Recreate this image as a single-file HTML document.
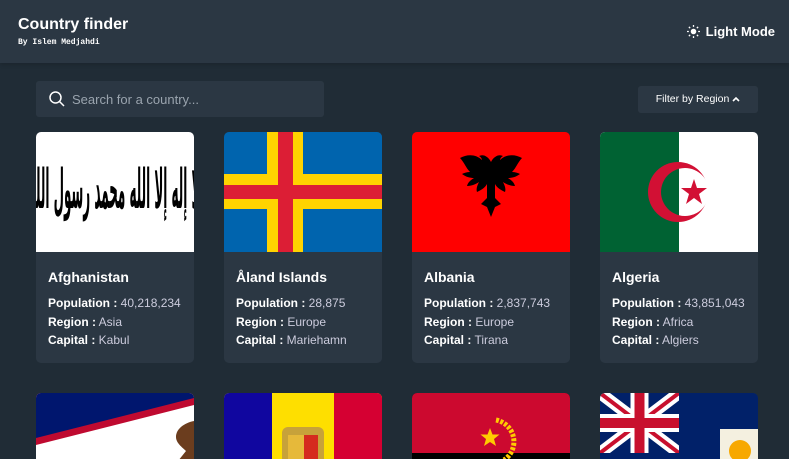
<!DOCTYPE html>
<html><head><meta charset="utf-8"><style>
*{margin:0;padding:0;box-sizing:border-box}
html,body{width:789px;height:459px;overflow:hidden}
body{background:#202c36;font-family:"Liberation Sans",sans-serif;color:#fff;position:relative}
.hdr{position:absolute;left:0;top:0;width:789px;height:63px;background:#2b3743;box-shadow:0 2px 4px rgba(0,0,0,.15)}
.t1{position:absolute;left:18px;top:16px;font-size:16px;font-weight:bold}
.t2{position:absolute;left:18px;top:38px;font-size:8px;font-family:"Liberation Mono",monospace;font-weight:bold}
.lm{position:absolute;right:14px;top:24px;font-size:13px;font-weight:bold}
.search{position:absolute;left:36px;top:81px;width:288px;height:36px;background:#2b3743;border-radius:3px}
.search span{position:absolute;left:36px;top:11px;font-size:13px;color:#9aa4ae}
.filter{position:absolute;left:638px;top:86px;width:120px;height:27px;background:#2b3743;border-radius:3px;font-size:10.5px;line-height:27px;text-align:center}
.card{position:absolute;width:158px;height:66px;background:#2b3743;border-radius:5px 5px 0 0;overflow:hidden}
.card.f{height:231px;border-radius:5px}
.flag{position:absolute;left:0;top:0;width:158px;height:120px;overflow:hidden}
.name{position:absolute;left:12px;top:137px;font-size:14px;font-weight:bold}
.info{position:absolute;left:12px;top:162px;font-size:12px;line-height:18.5px;color:#ccd}
.info b{color:#fff}
</style></head><body>
<div class="hdr"><div class="t1">Country finder</div><div class="t2">By Islem Medjahdi</div>
<div class="lm"><svg width="13" height="13" viewBox="0 0 14 14" style="vertical-align:-2px;margin-right:6px"><circle cx="7" cy="7" r="3" fill="#fff"/><g stroke="#fff" stroke-width="1.4"><path d="M7 0v2M7 12v2M0 7h2M12 7h2M2 2l1.4 1.4M10.6 10.6L12 12M2 12l1.4-1.4M10.6 3.4L12 2"/></g></svg>Light Mode</div></div>
<div class="search"><svg width="18" height="18" viewBox="0 0 18 18" style="position:absolute;left:12px;top:9px"><circle cx="7.5" cy="7.5" r="5.5" stroke="#fff" stroke-width="1.5" fill="none"/><path d="M11.5 11.5L16 16" stroke="#fff" stroke-width="1.5"/></svg><span>Search for a country...</span></div>
<div class="filter">Filter by Region <svg width="8" height="6" viewBox="0 0 8 6"><path d="M1 5l3-3 3 3" stroke="#fff" stroke-width="1.6" fill="none"/></svg></div>

<div class="card f" style="left:36px;top:132px"><div class="flag" style="background:#fff"><div style="position:absolute;left:0;top:24px;width:158px;height:70px;display:flex;justify-content:center;align-items:center"><span style="display:inline-block;white-space:nowrap;font-family:'DejaVu Sans',sans-serif;font-size:26px;font-weight:bold;color:#000;transform:scale(0.46,2.1)">لا إله إلا الله محمد رسول الله</span></div></div>
<div class="name">Afghanistan</div><div class="info"><b>Population :</b> 40,218,234<br><b>Region :</b> Asia<br><b>Capital :</b> Kabul</div></div>

<div class="card f" style="left:224px;top:132px"><div class="flag" style="background:#0064ae"><div style="position:absolute;left:43px;top:0;width:36px;height:120px;background:#ffd300"></div><div style="position:absolute;left:0;top:42px;width:158px;height:35px;background:#ffd300"></div><div style="position:absolute;left:54px;top:0;width:15px;height:120px;background:#dc1e35"></div><div style="position:absolute;left:0;top:53px;width:158px;height:14px;background:#dc1e35"></div></div>
<div class="name">Åland Islands</div><div class="info"><b>Population :</b> 28,875<br><b>Region :</b> Europe<br><b>Capital :</b> Mariehamn</div></div>

<div class="card f" style="left:412px;top:132px"><div class="flag" style="background:#f00"><svg width="158" height="120" viewBox="0 0 158 120"><path d="M79 30c-3-6-8-8-12-6 2 1 3 3 3 4-6-6-15-6-22-2 4 4 6 10 10 14-3 0-6 1-8 2 4 3 8 4 12 4-3 2-6 4-7 8 5 0 9-2 12-4-2 4-3 7-2 10 4-2 8-4 10-8l0 14-6 6 6 3 4 10 4-10 6-3-6-6 0-14c2 4 6 6 10 8 1-3 0-6-2-10 3 2 7 4 12 4-1-4-4-6-7-8 4 0 8-1 12-4-2-1-5-2-8-2 4-4 6-10 10-14-7-4-16-4-22 2 0-1 1-3 3-4-4-2-9 0-12 6z" fill="#000"/></svg></div>
<div class="name">Albania</div><div class="info"><b>Population :</b> 2,837,743<br><b>Region :</b> Europe<br><b>Capital :</b> Tirana</div></div>

<div class="card f" style="left:600px;top:132px"><div class="flag" style="background:#fff"><div style="position:absolute;left:0;top:0;width:79px;height:120px;background:#006233"></div>
<svg width="158" height="120" viewBox="0 0 158 120" style="position:absolute;left:0;top:0"><defs><clipPath id="l"><rect width="79" height="120"/></clipPath><clipPath id="r"><rect x="79" width="79" height="120"/></clipPath></defs><circle cx="78" cy="60" r="30" fill="#d21034"/><circle cx="85" cy="60" r="24" fill="#006233" clip-path="url(#l)"/><circle cx="85" cy="60" r="24" fill="#fff" clip-path="url(#r)"/><path d="M94 47l3 9 10 0-8 6 3 10-8-6-8 6 3-10-8-6 10 0z" fill="#d21034"/></svg></div>
<div class="name">Algeria</div><div class="info"><b>Population :</b> 43,851,043<br><b>Region :</b> Africa<br><b>Capital :</b> Algiers</div></div>

<div class="card" style="left:36px;top:393px"><div class="flag" style="background:#fff"><svg width="158" height="120" viewBox="0 0 158 120"><path d="M0 0h158v12L0 52z" fill="#bf0a30"/><path d="M0 0h158v5L0 45z" fill="#00166e"/><path d="M158 28c-10 2-18 8-18 16 0 6 6 10 10 14l-8 10h16z" fill="#6b3d1e"/></svg></div></div>
<div class="card" style="left:224px;top:393px"><div class="flag" style="background:#fedf00"><div style="position:absolute;left:0;top:0;width:48px;height:120px;background:#10069f"></div><div style="position:absolute;left:110px;top:0;width:48px;height:120px;background:#d50032"></div><div style="position:absolute;left:58px;top:34px;width:42px;height:40px;background:#c7a23a;border-radius:6px"></div><div style="position:absolute;left:64px;top:42px;width:30px;height:30px;background:#e6b93a"></div><div style="position:absolute;left:80px;top:42px;width:14px;height:30px;background:#d52b1e"></div></div></div>
<div class="card" style="left:412px;top:393px"><div class="flag" style="background:#000"><div style="position:absolute;left:0;top:0;width:158px;height:60px;background:#cc092f"></div><svg width="158" height="120" viewBox="0 0 158 120" style="position:absolute;left:0;top:0"><path d="M78 35l2.5 6.5 7 0-5.5 4.5 2 7-6-4-6 4 2-7-5.5-4.5 7 0z" fill="#ffcb00"/><path d="M84 27a22 22 0 0 1 8 40" stroke="#ffcb00" stroke-width="5" fill="none" stroke-dasharray="3 1.5"/></svg></div></div>
<div class="card" style="left:600px;top:393px"><div class="flag" style="background:#012169"><svg width="158" height="120" viewBox="0 0 158 120"><svg width="79" height="60" viewBox="0 0 79 60" preserveAspectRatio="none"><rect width="79" height="60" fill="#012169"/><path d="M0 0l79 60M79 0L0 60" stroke="#fff" stroke-width="12"/><path d="M0 0l79 60M79 0L0 60" stroke="#c8102e" stroke-width="4"/><path d="M39.5 0v60M0 30h79" stroke="#fff" stroke-width="18"/><path d="M39.5 0v60M0 30h79" stroke="#c8102e" stroke-width="10"/></svg><path d="M120 36h38v40h-38z" fill="#f4f0e0"/><circle cx="140" cy="58" r="11" fill="#f7a800"/></svg></div></div>
</body></html>
